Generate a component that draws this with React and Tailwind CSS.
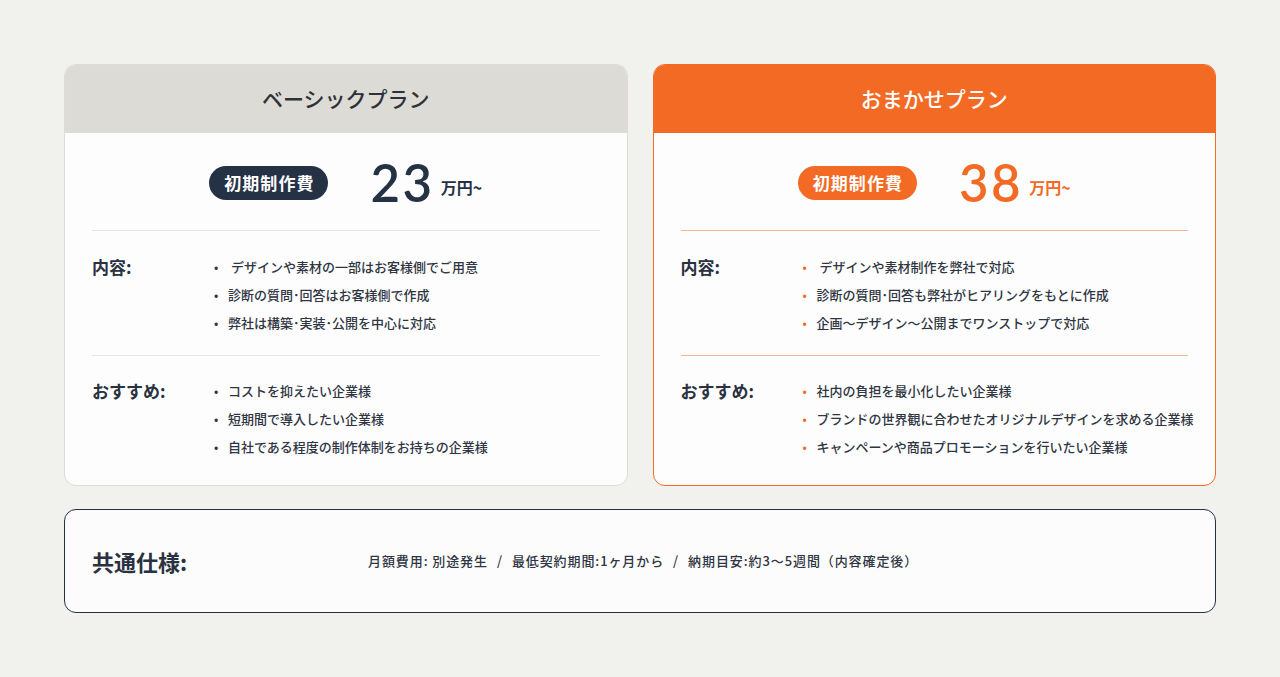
import React from "react";

const JP = { fontFamily: '"Noto Sans CJK JP", "Noto Sans", sans-serif' };
const NUM = { fontFamily: 'Lato, "Noto Sans CJK JP", sans-serif' };

function Item({ text, orange }) {
  return (
    <li className="flex items-center h-[28px] text-[13px] font-medium text-[#2f3542] whitespace-nowrap">
      <span className={`w-[14px] text-[12px] ${orange ? "text-[#f26a24]" : "text-[#2f3542]"}`}>•</span>
      <span>{text}</span>
    </li>
  );
}

function Section({ label, items, orange, divider }) {
  return (
    <div
      className={`flex ${
        divider ? `border-b ${orange ? "border-[#f3b593]" : "border-[#e5e5e3]"} pt-[22px] pb-[18px]` : "pt-[21px]"
      }`}
    >
      <div className="w-[122px] shrink-0 h-[28px] flex items-center text-[17px] font-bold text-[#2a3140]">{label}</div>
      <ul className="flex flex-col">
        {items.map((t, i) => (
          <Item key={i} text={t} orange={orange} />
        ))}
      </ul>
    </div>
  );
}

function Card({ title, price, orange, content, recommend }) {
  return (
    <div
      className={`flex-1 rounded-[12px] overflow-hidden border ${
        orange ? "border-[#f26a24]" : "border-[#dddcd7]"
      } bg-[#fdfdfd] h-[422px] flex flex-col`}
    >
      <div
        className={`h-[68px] shrink-0 flex items-center justify-center text-[21px] font-medium ${
          orange ? "bg-[#f26a24] text-white" : "bg-[#dcdbd5] text-[#2e3138]"
        }`}
      >
        {title}
      </div>
      <div className="px-[27px]">
        <div
          className={`flex items-center justify-center h-[98px] pt-[33px] pb-[31px] border-b ${
            orange ? "border-[#f3b593]" : "border-[#e5e5e3]"
          }`}
        >
          <span
            className={`h-[34px] pl-[15px] pr-[14px] rounded-full flex items-center text-[17px] font-bold text-white tracking-[0.06em] ${
              orange ? "bg-[#f26a24]" : "bg-[#253246]"
            }`}
          >
            初期制作費
          </span>
          <span
            style={NUM}
            className={`ml-[42px] text-[51px] leading-[34px] font-semibold tracking-[0.05em] ${
              orange ? "text-[#f26a24]" : "text-[#253246]"
            }`}
          >
            {price}
          </span>
          <span
            className={`ml-[6px] mt-[8px] text-[16px] leading-[20px] font-bold ${
              orange ? "text-[#f26a24]" : "text-[#253246]"
            }`}
          >
            万円~
          </span>
        </div>
        <Section label="内容:" items={content} orange={orange} divider />
        <Section label="おすすめ:" items={recommend} orange={orange} />
      </div>
    </div>
  );
}

export default function App() {
  return (
    <div style={JP} className="w-[1280px] h-[677px] bg-[#f1f1ed] pt-[64px] px-[64px]">
      <div className="flex gap-[25px]">
        <Card
          title="ベーシックプラン"
          price="23"
          content={[
            "\u00a0デザインや素材の一部はお客様側でご用意",
            "診断の質問･回答はお客様側で作成",
            "弊社は構築･実装･公開を中心に対応",
          ]}
          recommend={["コストを抑えたい企業様", "短期間で導入したい企業様", "自社である程度の制作体制をお持ちの企業様"]}
        />
        <Card
          orange
          title="おまかせプラン"
          price="38"
          content={[
            "\u00a0デザインや素材制作を弊社で対応",
            "診断の質問･回答も弊社がヒアリングをもとに作成",
            "企画〜デザイン〜公開までワンストップで対応",
          ]}
          recommend={[
            "社内の負担を最小化したい企業様",
            "ブランドの世界観に合わせたオリジナルデザインを求める企業様",
            "キャンペーンや商品プロモーションを行いたい企業様",
          ]}
        />
      </div>
      <div className="mt-[23px] h-[104px] rounded-[12px] border border-[#253246] bg-[#fcfcfc] flex items-center px-[27px]">
        <div className="w-[276px] shrink-0 text-[22px] font-bold text-[#2a3140]">共通仕様:</div>
        <div className="flex items-center text-[13px] font-medium text-[#2f3542] tracking-[0.07em] whitespace-nowrap">
          <span>月額費用: 別途発生</span>
          <span className="mx-[9px]">/</span>
          <span>最低契約期間:1ヶ月から</span>
          <span className="mx-[9px]">/</span>
          <span>納期目安:約3〜5週間（内容確定後）</span>
        </div>
      </div>
    </div>
  );
}
